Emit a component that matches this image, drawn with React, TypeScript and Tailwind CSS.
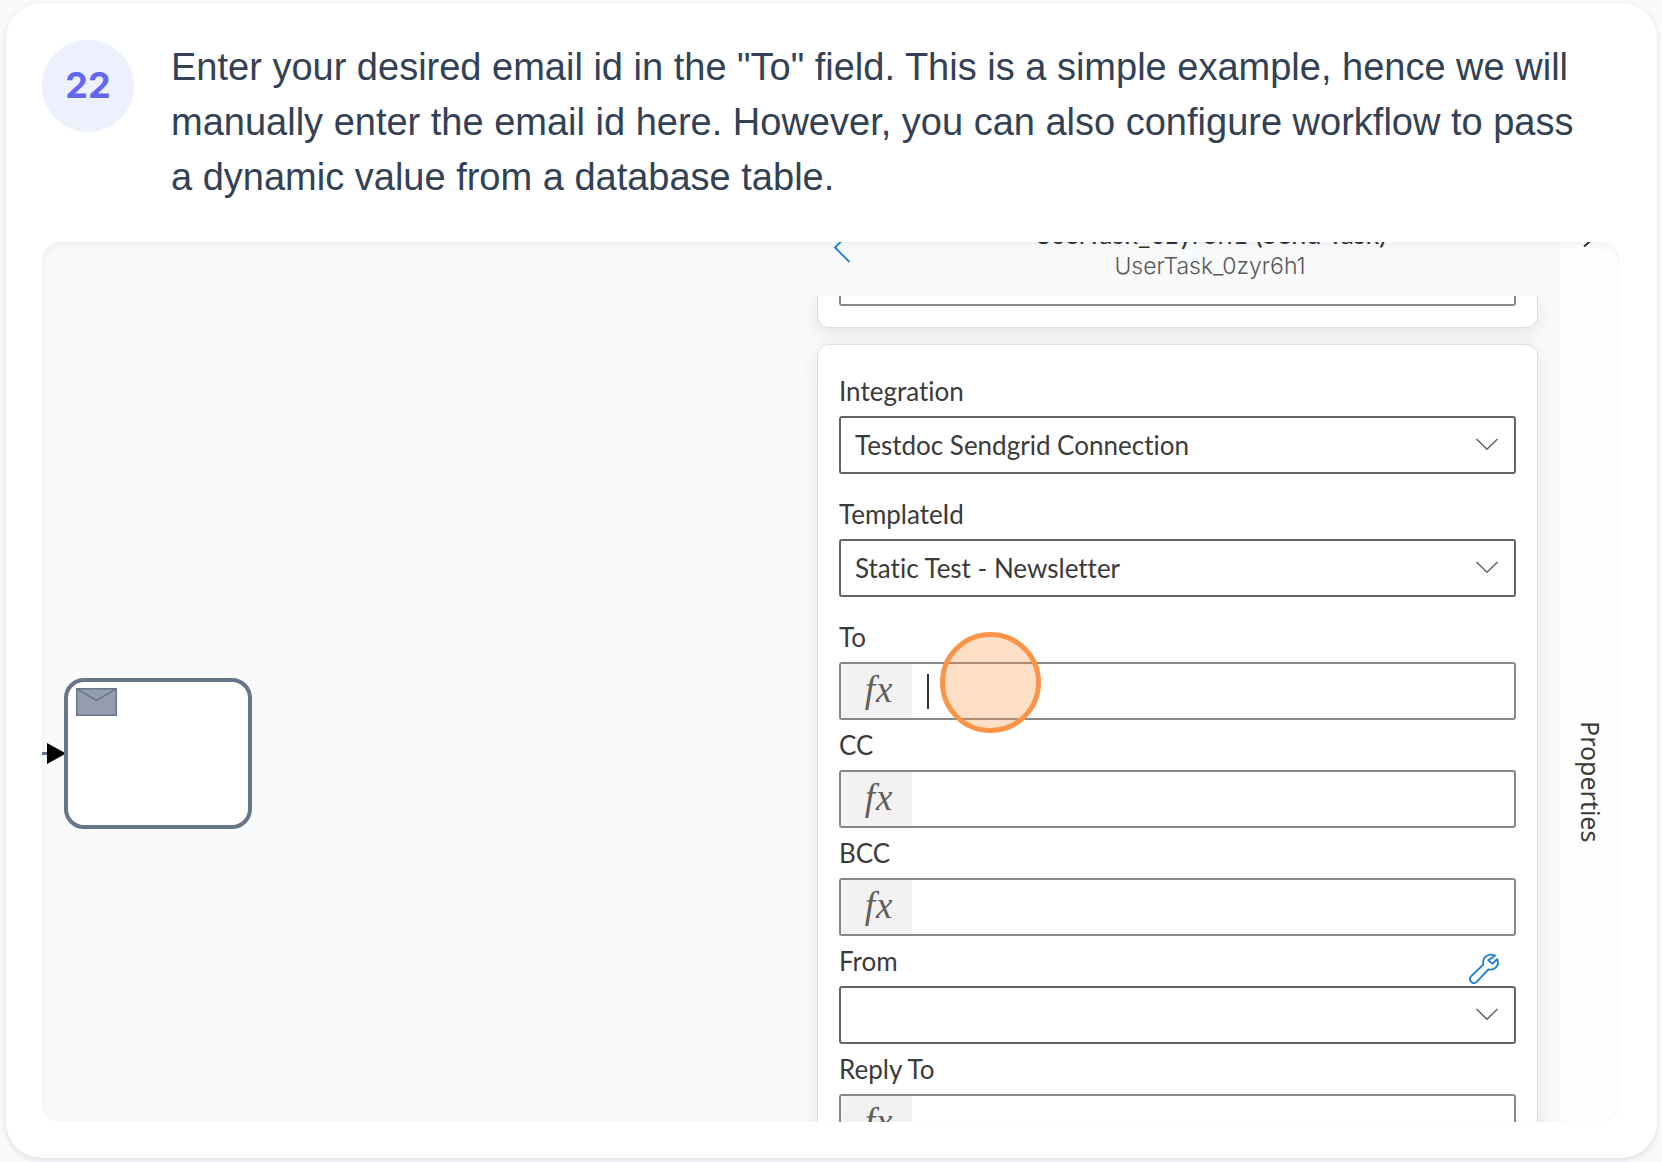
import type { ReactNode } from "react";

const LATO = "font-['Lato','Liberation_Sans',sans-serif] [font-variant-ligatures:none]";

function Field({ id, label, roomy, children }: { id: string; label: string; roomy?: boolean; children: ReactNode }) {
  return (
    <div className={roomy ? "mb-[15px]" : ""}>
      <label htmlFor={id} className="block h-[50px] pt-[5px] text-[26px] leading-[40px] text-[#3b3a39]">
        {label}
      </label>
      {children}
    </div>
  );
}

function Dropdown({ id, value }: { id: string; value: string }) {
  return (
    <div className="relative">
      <select
        id={id}
        defaultValue={value}
        className="block h-[58px] w-full appearance-none rounded-[3px] border-2 border-[#666462] bg-white pl-[14px] pr-16 text-[26px] text-[#3b3a39] outline-none [font-variant-ligatures:none]"
      >
        <option value={value}>{value}</option>
      </select>
      <svg
        className="pointer-events-none absolute right-[17px] top-[21px] h-[14px] w-[24px]"
        viewBox="0 0 24 14"
        fill="none"
        stroke="#666462"
        strokeWidth="1.5"
      >
        <path d="M1.5 2 12 12.2 22.5 2" />
      </svg>
    </div>
  );
}

function Formula({ id, focused }: { id: string; focused?: boolean }) {
  return (
    <div className="relative flex h-[58px] rounded-[3px] border-2 border-[#8a8886] bg-white">
      <span className="flex w-[71px] shrink-0 items-center justify-center gap-px bg-[#f3f2f1] pb-1 pl-1 font-['Liberation_Serif',serif] text-[37px] italic leading-none text-[#605e5c]">
        <span>f</span>
        <span>x</span>
      </span>
      <input id={id} type="text" className="min-w-0 flex-1 bg-transparent px-4 text-[26px] text-[#323130] outline-none" />
      {focused && (
        <>
          <span className="absolute left-[86px] top-[10px] h-[35px] w-[2px] bg-[#323130]" />
          <span className="absolute left-[99px] top-[-32px] size-[101px] rounded-full border-[5px] border-[#fb9447] bg-[#fb923c]/30" />
        </>
      )}
    </div>
  );
}

function Diagram() {
  return (
    <div className="flex min-w-0 flex-1 items-start pt-[436px]">
      <svg className="mt-[64px] h-[22px] w-[24px] shrink-0" viewBox="0 0 24 22">
        <path d="M0 11.5H6" stroke="#64748b" strokeWidth="3" />
        <path d="M5 1 24 11.5 5 22Z" fill="#000" />
      </svg>
      <div className="-ml-[2px] h-[151px] w-[188px] rounded-[20px] border-4 border-[#687689] bg-white pl-2 pt-[6px]">
        <svg className="h-[28px] w-[41px]" viewBox="0 0 41 28" fill="#949dad" stroke="#687689" strokeWidth="1.5">
          <rect x="0.75" y="0.75" width="39.5" height="26.5" />
          <path d="M1 1 20.5 12.5 40 1" fill="none" />
        </svg>
      </div>
    </div>
  );
}

function PropertiesPanel() {
  return (
    <div className={"flex w-[766px] shrink-0 flex-col " + LATO}>
      <header className="relative z-10 flex h-[54px] shrink-0 flex-col justify-end overflow-hidden bg-[#f9fafc] pl-[64px] text-center">
        <button type="button" aria-label="Back" className="absolute left-[38px] top-[-10px]">
          <svg className="h-[32px] w-[18px]" viewBox="0 0 18 32" fill="none" stroke="#1c7fd6" strokeWidth="1.8">
            <path d="M16.5 1 2 15.5 16.5 30" />
          </svg>
        </button>
        <div className="text-[27px] leading-[32px] text-[#323130]">UserTask_0zyr6h1 (Send Task)</div>
        <div className="mb-[14px] font-['Inter',sans-serif] text-[23px] font-light leading-[32px] text-[#5a5856]">
          UserTask_0zyr6h1
        </div>
      </header>
      <div className="flex flex-1 flex-col gap-4 pl-[22px] pr-[23px]">
        <section className="flex h-[32px] shrink-0 flex-col justify-end rounded-b-[12px] border border-t-0 border-[#dcdde0] bg-white px-[21px] pb-[21px] shadow-[0_6px_20px_rgba(0,0,0,0.09)]">
          <div className="h-[10px] rounded-b-[3px] border-2 border-t-0 border-[#8a8886]" />
        </section>
        <section className="flex-1 rounded-t-[12px] border border-[#dcdde0] bg-white px-[21px] pt-[21px] shadow-[0_6px_20px_rgba(0,0,0,0.09)]">
          <Field id="integration" label="Integration" roomy>
            <Dropdown id="integration" value="Testdoc Sendgrid Connection" />
          </Field>
          <Field id="template" label="TemplateId" roomy>
            <Dropdown id="template" value="Static Test - Newsletter" />
          </Field>
          <Field id="to" label="To">
            <Formula id="to" focused />
          </Field>
          <Field id="cc" label="CC">
            <Formula id="cc" />
          </Field>
          <Field id="bcc" label="BCC">
            <Formula id="bcc" />
          </Field>
          <div className="relative">
            <Field id="from" label="From">
              <Dropdown id="from" value="" />
            </Field>
            <button type="button" aria-label="Configure sender" className="absolute right-[15px] top-[16px]">
              <svg
                className="size-[34px]"
                viewBox="800 580 102 102"
                fill="none"
                stroke="#1c7fd6"
                strokeWidth="5.5"
                strokeLinejoin="round"
              >
                <path d="M884 591 C865 582 844 596 849 618 L813 652 C802 664 817 681 830 669 L864 632 C884 636 898 620 891 601 L877 615 L864 605 Z" />
              </svg>
            </button>
          </div>
          <Field id="reply" label="Reply To">
            <Formula id="reply" />
          </Field>
        </section>
      </div>
    </div>
  );
}

export default function App() {
  return (
    <main className="min-h-screen bg-[#f8fafc] pb-[3px] pl-[6px] pr-[5px] pt-[3px]">
      <article className="rounded-[36px] bg-white pb-[36px] pl-[36px] pr-[37px] pt-[37px] shadow-[0_2px_6px_rgba(15,23,42,0.12)]">
        <div className="flex gap-[37px]">
          <div className="flex size-[92px] shrink-0 items-center justify-center rounded-full bg-[#edf1fe] pb-[2px] font-['Inter',sans-serif] text-[36px] font-bold text-[#6366f1]">
            22
          </div>
          <p className="flex-1 pr-10 font-['Liberation_Sans',sans-serif] text-[38px] leading-[55px] text-[#334155]">
            Enter your desired email id in the "To" field. This is a simple example, hence we will manually enter the
            email id here. However, you can also configure workflow to pass a dynamic value from a database table.
          </p>
        </div>
        <div className="relative mt-[37px] flex aspect-[1578/880] w-full overflow-hidden rounded-[18px] bg-[#f9fafc]">
          <Diagram />
          <PropertiesPanel />
          <aside className="relative flex w-[59px] shrink-0 items-center justify-center bg-[#fefefe]">
            <svg className="absolute left-[20px] top-[-10px] h-[16px] w-[12px]" viewBox="0 0 12 16" fill="none" stroke="#323130" strokeWidth="2">
              <path d="M2 2 10 8.500 3 14.500" />
            </svg>
            <span className="mt-[200px] font-['Noto_Sans',sans-serif] text-[25px] leading-[32px] text-[#3b3a39] [writing-mode:vertical-rl]">
              Properties
            </span>
          </aside>
          <div className="pointer-events-none absolute inset-0 z-20 rounded-[18px] shadow-[inset_0_3px_8px_rgba(15,23,42,0.05)]" />
        </div>
      </article>
    </main>
  );
}
